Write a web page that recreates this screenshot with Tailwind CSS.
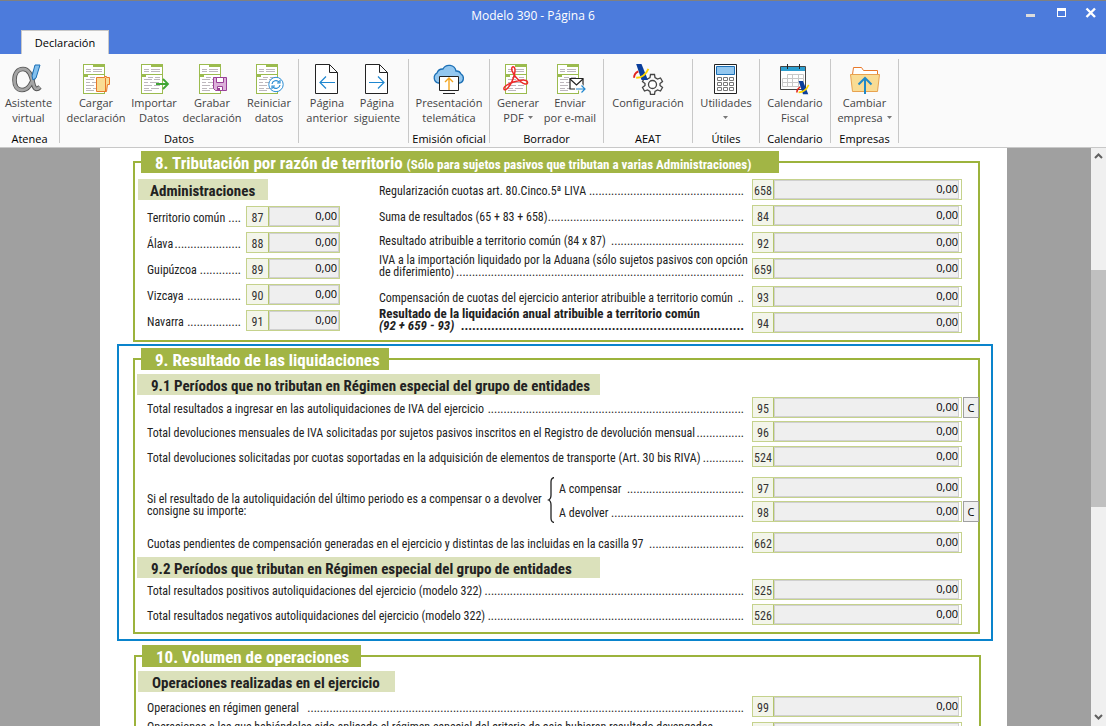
<!DOCTYPE html>
<html lang="es">
<head>
<meta charset="utf-8">
<title>Modelo 390 - Página 6</title>
<script src="https://cdn.jsdelivr.net/npm/@tailwindcss/browser@4"></script>
</head>
<body class="flex h-screen flex-col overflow-hidden bg-[#a0a0a0] font-['Open_Sans','Noto_Sans',sans-serif] text-[11px] text-[#444]">

<svg class="hidden" aria-hidden="true">
  <symbol id="doc" viewBox="0 0 32 32">
    <rect x="3.5" y="1.5" width="21" height="29" fill="#fff" stroke="#9bbb4e"/>
    <path d="M13 1h12v3H13zM3 11h22v1H3zM3 12h5v2H3z" fill="#9bbb4e"/>
    <path d="M6 6.5h5M13 6.5h9M6 8.5h5M13 8.5h9M10 14.5h5M17 14.5h5M6 16.5h8M16 16.5h6M6 19.5h4M12 19.5h9M6 22.5h8M16 22.5h6M6 25.5h5M13 25.5h8M6 27.5h8" stroke="#bdb7bd" fill="none"/>
  </symbol>
  <symbol id="aeat" viewBox="0 0 16 16">
    <path d="M3 0h5l6 15H8z" fill="#0a3e9c"/>
    <path d="M1 13c0-3 2-5 4-6" stroke="#e2231a" stroke-width="1.800" fill="none"/>
    <path d="M3 13c5 0 9-3 11.500-8.500" stroke="#ffd500" stroke-width="1.800" fill="none"/>
  </symbol>
</svg>

<header class="border-t border-[#808080] bg-[#4c7bdc]">
  <div class="relative flex h-[29px] items-center justify-center">
    <h1 class="pr-[40px] text-[12px] leading-4 text-white">Modelo 390 - Página 6</h1>
    <div class="absolute top-[3px] right-[6px] flex gap-3">
      <button class="flex size-[18px] items-center justify-center" aria-label="Minimizar"><svg class="size-[18px]" viewBox="0 0 18 18"><path d="M4 10h9v3H4z" fill="#dcdcdc"/></svg></button>
      <button class="flex size-[18px] items-center justify-center" aria-label="Maximizar"><svg class="size-[18px]" viewBox="0 0 18 18"><path d="M5 4h9v9H5zM6 7v5h7V7z" fill="#fff" fill-rule="evenodd"/></svg></button>
      <button class="flex size-[18px] items-center justify-center" aria-label="Cerrar"><svg class="size-[18px]" viewBox="0 0 18 18"><path d="M4.500 4.500l8.500 8.500M13 4.500l-8.500 8.500" stroke="#fff" stroke-width="2.400"/></svg></button>
    </div>
  </div>
  <nav class="flex pl-[21px]">
    <button class="h-6 w-[88px] border border-b-0 border-[#c8c8c8] bg-[#fafafa] pt-px text-black">Declaración</button>
  </nav>
</header>

<div class="flex h-[94px] shrink-0 border-b border-[#c8c8c8] bg-[#fafafa] pt-[5px] pb-1 leading-[15px] whitespace-nowrap">
  <section class="flex w-[60px] shrink-0 flex-col justify-between border-r border-[#c8c8c8]">
    <div class="flex justify-center pr-[2px]">
      <button class="flex flex-col items-center"><svg class="mt-1 size-8" viewBox="0 0 32 32"><path d="M23 9C21 18 17 27 10 27C5 27 2.500 23 2.500 17C2.500 10 6 6 11 6C17 6 19 12 21 20C22 25 24 28 28 24" stroke="#555" stroke-width="4.600" fill="none"/><path d="M23 9C21 18 17 27 10 27C5 27 2.500 23 2.500 17C2.500 10 6 6 11 6C17 6 19 12 21 20C22 25 24 28 28 24" stroke="#a5a5a5" stroke-width="2.800" fill="none"/><path d="M23 2h5l-4 13-3 2-1-4z" fill="#83c0ee" stroke="#1b6fb5"/></svg>Asistente<br>virtual</button>
    </div>
    <h2 class="text-center leading-[9px] text-black">Atenea</h2>
  </section>
  <section class="flex w-[239px] shrink-0 flex-col justify-between border-r border-[#c8c8c8]">
    <div class="flex pl-[7px]">
      <button class="flex w-[58px] flex-col items-center"><svg class="mt-1 size-8" viewBox="0 0 32 32"><use href="#doc"/><path d="M16.500 14.500h8v-1h2v1h3v7h-2l-1 7h-10z" fill="#f9dc94" stroke="#e8792b"/><path d="M25.500 15v13" stroke="#e8792b"/></svg>Cargar<br>declaración</button>
      <button class="flex w-[58px] flex-col items-center"><svg class="mt-1 size-8" viewBox="0 0 32 32"><use href="#doc"/><path d="M18 21h12M25 16l5 5-5 5" stroke="#3fa535" stroke-width="1.800" fill="none"/></svg>Importar<br>Datos</button>
      <button class="flex w-[58px] flex-col items-center"><svg class="mt-1 size-8" viewBox="0 0 32 32"><use href="#doc"/><path d="M17.500 14.500h13v13h-11l-2-2z" fill="#dcb0da" stroke="#993f97"/><path d="M20.500 14.500h7v5h-7zM21.500 23.500h5v4h-5z" fill="#fff" stroke="#993f97"/><path d="M22 25h2v2h-2z" fill="#993f97"/></svg>Grabar<br>declaración</button>
      <button class="flex w-[56px] flex-col items-center"><svg class="mt-1 size-8" viewBox="0 0 32 32"><use href="#doc"/><circle cx="23" cy="21.500" r="7.200" fill="#fff" stroke="#2a8dd4"/><path d="M19 21a4 4 0 0 1 7-2M27 17v3h-3M27 22a4 4 0 0 1-7 2M19 26v-3h3" stroke="#2a8dd4" stroke-width="1.200" fill="none"/></svg>Reiniciar<br>datos</button>
    </div>
    <h2 class="text-center leading-[9px] text-black">Datos</h2>
  </section>
  <section class="flex w-[110px] shrink-0 flex-col border-r border-[#c8c8c8]">
    <div class="flex pl-[3px]">
      <button class="flex w-[50px] flex-col items-center"><svg class="mt-1 size-8" viewBox="0 0 32 32"><path d="M4.500 1.500h14l8 8v21h-22zM18.500 1.500v8h8" fill="#fff" stroke="#222"/><path d="M24 19.500H9M15 13.500l-6 6 6 6" stroke="#1f87d0" stroke-width="1.200" fill="none"/></svg>Página<br>anterior</button>
      <button class="flex w-[50px] flex-col items-center"><svg class="mt-1 size-8" viewBox="0 0 32 32"><path d="M4.500 1.500h14l8 8v21h-22zM18.500 1.500v8h8" fill="#fff" stroke="#222"/><path d="M8 19.500h15M17 13.500l6 6-6 6" stroke="#1f87d0" stroke-width="1.200" fill="none"/></svg>Página<br>siguiente</button>
    </div>
  </section>
  <section class="flex w-[81px] shrink-0 flex-col justify-between border-r border-[#c8c8c8]">
    <div class="flex justify-center">
      <button class="flex flex-col items-center"><svg class="mt-1 h-8 w-[34px]" viewBox="0 0 34 32"><path d="M6 20a5.500 5.500 0 0 1-1-10a6 6 0 0 1 6-4a7 7 0 0 1 13 2a5 5 0 0 1 5 3a5 5 0 0 1-1 9z" fill="#93c7ef" stroke="#1b6fb5" stroke-width="1.300"/><path d="M7.500 13.500h19v14h-19z" fill="#fff" stroke="#222"/><path d="M11 30.500h12" stroke="#222"/><path d="M17 27V15M13 19l4-4 4 4" stroke="#f2a51f" stroke-width="1.400" fill="none"/></svg>Presentación<br>telemática</button>
    </div>
    <h2 class="text-center leading-[9px] text-black">Emisión oficial</h2>
  </section>
  <section class="flex w-[114px] shrink-0 flex-col justify-between border-r border-[#c8c8c8]">
    <div class="flex pl-[2px]">
      <button class="flex w-[52px] flex-col items-center"><svg class="mt-1 size-8" viewBox="0 0 32 32"><use href="#doc"/><path d="M10.500 4c2.500-1 3 3 2 7c-1.500 6-5 13-8.500 15.500c-2 1-3-1-1-3c3-3 9-5 15-6c5-1 8 0 7.500 2.500c-.500 2-4 1-7-1.500c-4-3-7-7-8.500-11c-.500-2-.500-3 .500-3.500z" stroke="#ee2a2a" stroke-width="1.500" fill="none"/></svg>Generar<span class="flex items-center gap-1">PDF <svg class="h-[3px] w-[5px]" viewBox="0 0 5 3"><path d="M0 0h5L2.500 3z" fill="#777"/></svg></span></button>
      <button class="flex w-[52px] flex-col items-center"><svg class="mt-1 size-8" viewBox="0 0 32 32"><use href="#doc"/><path d="M16 15.500h13v10.500H16z" fill="#fff" stroke="#222" stroke-width="1.200"/><path d="M16 16l6.500 6 6.500-6" fill="none" stroke="#222" stroke-width="1.200"/><path d="M21 26h10M27 22l4 4-4 4" stroke="#fafafa" stroke-width="3" fill="none"/><path d="M22 26h9M27.500 22.500l3.500 3.500-3.500 3.500" stroke="#1f87d0" stroke-width="1.200" fill="none"/></svg>Enviar<br>por e-mail</button>
    </div>
    <h2 class="text-center leading-[9px] text-black">Borrador</h2>
  </section>
  <section class="flex w-[89px] shrink-0 flex-col justify-between border-r border-[#c8c8c8]">
    <div class="flex justify-center">
      <button class="flex flex-col items-center"><svg class="mt-1 size-8" viewBox="0 0 32 32"><path d="M18.500 11.500h4l.500 3 2.500 1.500 3-1 2 3.500-2.500 2v2l2.500 2-2 3.500-3-1-2.500 1.500-.500 3h-4l-.500-3-2.500-1.500-3 1-2-3.500 2.500-2v-2l-2.500-2 2-3.500 3 1 2.500-1.500z" fill="#fafafa" stroke="#444" stroke-width="1.300"/><circle cx="20.500" cy="21.500" r="4" fill="#fff" stroke="#444" stroke-width="1.300"/><use href="#aeat" x="1" y="1" width="17" height="17"/></svg>Configuración</button>
    </div>
    <h2 class="text-center leading-[9px] text-black">AEAT</h2>
  </section>
  <section class="flex w-[67px] shrink-0 flex-col justify-between border-r border-[#c8c8c8]">
    <div class="flex justify-center">
      <button class="flex flex-col items-center"><svg class="mt-1 size-8" viewBox="0 0 32 32"><path d="M4.500 1.500h22v29h-22z" fill="#fff" stroke="#222"/><path d="M6.500 3.500h18v8h-18z" fill="#93c7ef" stroke="#1b6fb5"/><path d="M7.500 14.500h4v3h-4zM13.500 14.500h4v3h-4zM19.500 14.500h4v3h-4zM7.500 19.500h4v3h-4zM13.500 19.500h4v3h-4zM19.500 19.500h4v3h-4zM7.500 24.500h4v3h-4zM13.500 24.500h4v3h-4zM19.500 24.500h4v3h-4z" fill="#fff" stroke="#777"/></svg>Utilidades<svg class="mt-[6px] h-[3px] w-[5px]" viewBox="0 0 5 3"><path d="M0 0h5L2.500 3z" fill="#777"/></svg></button>
    </div>
    <h2 class="text-center leading-[9px] text-black">Útiles</h2>
  </section>
  <section class="flex w-[71px] shrink-0 flex-col justify-between border-r border-[#c8c8c8]">
    <div class="flex justify-center">
      <button class="flex flex-col items-center"><svg class="mt-1 size-8" viewBox="0 0 32 32"><path d="M1.500 3.500h25v23h-25z" fill="#fff" stroke="#444"/><path d="M2 4h24v4H2z" fill="#2d9fd0"/><path d="M8.500 1v5M20.500 1v5" stroke="#222"/><path d="M8.500 11.500h16v4h-16zM3.500 15.500h21v8h-21zM3.500 19.500h21M8.500 11.500v12M13.500 11.500v12M19.500 11.500v12" fill="none" stroke="#c8c8c8"/><use href="#aeat" x="17" y="18" width="14" height="14"/></svg>Calendario<br>Fiscal</button>
    </div>
    <h2 class="text-center leading-[9px] text-black">Calendario</h2>
  </section>
  <section class="flex w-[68px] shrink-0 flex-col justify-between border-r border-[#c8c8c8]">
    <div class="flex justify-center">
      <button class="flex flex-col items-center"><svg class="mt-1 size-8" viewBox="0 0 32 32"><path d="M3.500 11.500l1-7h8l2 3h14v4" fill="#fff" stroke="#e8792b"/><path d="M1.500 11.500h29l-2 17h-25z" fill="#f9dc94" stroke="#e8a24f"/><path d="M16 31V15M9.500 21.500L16 15l6.500 6.500" fill="none" stroke="#2089c8" stroke-width="2"/></svg>Cambiar<span class="flex items-center gap-1">empresa <svg class="h-[3px] w-[5px]" viewBox="0 0 5 3"><path d="M0 0h5L2.500 3z" fill="#777"/></svg></span></button>
    </div>
    <h2 class="text-center leading-[9px] text-black">Empresas</h2>
  </section>
</div>

<div class="flex min-h-0 flex-1">
  <main class="flex-1 overflow-hidden pr-[84px] pl-[100px]">
    <form class="h-full overflow-hidden bg-white font-['Roboto_Condensed','Arial_Narrow',sans-serif] text-[12px] leading-3 text-[#222]">

      <fieldset class="mt-[3px] mr-[27px] ml-[33px] min-w-0 border-2 border-[#9cb33c] pb-[7px]">
        <legend class="ml-[6px] h-[22px] w-[638px] bg-[#a2b545] pl-[14px] text-[17px] leading-[25px] font-bold whitespace-nowrap text-white">8. Tributación por razón de territorio <span class="text-[13px]">(Sólo para sujetos pasivos que tributan a varias Administraciones)</span></legend>
        <div class="flex pt-[6px]">
          <div class="w-[205px] shrink-0">
            <h3 class="ml-[3px] h-[21px] w-[130px] bg-[#dbe1bb] pl-3 text-[15px] leading-[25px] font-bold">Administraciones</h3>
            <div id="administraciones" class="mt-[6px] flex flex-col gap-[5px] pl-3"></div>
          </div>
          <div id="territorio" class="min-w-0 flex-1 pl-[39px]"></div>
        </div>
      </fieldset>

      <div class="mt-[2px] mr-[14px] ml-[17px] border-2 border-[#0a84cc] pt-[2px] pr-[11px] pb-[5px] pl-[14px]">
        <fieldset class="min-w-0 border-2 border-[#9cb33c] pb-[7px]">
          <legend class="ml-[6px] h-[22px] w-[248px] bg-[#a2b545] pl-[14px] text-[17px] leading-[25px] font-bold whitespace-nowrap text-white">9. Resultado de las liquidaciones</legend>
          <h3 class="mt-1 ml-[2px] h-[21px] w-[463px] bg-[#dbe1bb] pl-[14px] text-[15px] leading-[25px] font-bold whitespace-nowrap">9.1 Períodos que no tributan en Régimen especial del grupo de entidades</h3>
          <div id="periodos-no" class="pl-3"></div>
          <div class="mt-[10px] flex pl-3">
            <p class="w-[400px] shrink-0 pt-4 whitespace-nowrap">Si el resultado de la autoliquidación del último periodo es a compensar o a devolver<br>consigne su importe:</p>
            <svg class="h-[46px] w-[8px] shrink-0" viewBox="0 0 8 46"><path d="M7 .500Q4 1 4 5V18Q4 22 1.500 23Q4 24 4 28V41Q4 45 7 45.500" fill="none" stroke="#222" stroke-width="1.300"/></svg>
            <div id="resultado" class="min-w-0 flex-1 pl-1"></div>
          </div>
          <div id="cuotas" class="mt-[9px] pl-3"></div>
          <h3 class="mt-1 ml-[2px] h-[21px] w-[463px] bg-[#dbe1bb] pl-[14px] text-[15px] leading-[25px] font-bold whitespace-nowrap">9.2 Períodos que tributan en Régimen especial del grupo de entidades</h3>
          <div id="periodos-si" class="pl-3"></div>
        </fieldset>
      </div>

      <fieldset class="mt-1 mr-[26px] ml-[34px] min-w-0 border-2 border-[#9cb33c] pb-24">
        <legend class="ml-[6px] h-[22px] w-[219px] bg-[#a2b545] pl-[14px] text-[17px] leading-[25px] font-bold whitespace-nowrap text-white">10. Volumen de operaciones</legend>
        <h3 class="mt-1 ml-[2px] h-[21px] w-[257px] bg-[#dbe1bb] pl-[14px] text-[15px] leading-[25px] font-bold whitespace-nowrap">Operaciones realizadas en el ejercicio</h3>
        <div id="operaciones" class="pr-px pl-[11px]"></div>
      </fieldset>
    </form>
  </main>

  <div class="flex w-[15px] shrink-0 flex-col items-center bg-[#f0f0f0]">
    <button class="flex h-4 w-full items-center justify-center" aria-label="Subir"><svg class="h-[6px] w-[9px]" viewBox="0 0 9 6"><path d="M1 5l3.500-3.500L8 5" fill="none" stroke="#606060" stroke-width="2"/></svg></button>
    <div class="flex w-full flex-1 flex-col">
      <div class="h-[106px]"></div>
      <div class="h-[237px] bg-[#c0c0c0]"></div>
    </div>
    <button class="flex h-[18px] w-full items-center justify-center" aria-label="Bajar"><svg class="h-[6px] w-[9px]" viewBox="0 0 9 6"><path d="M1 1l3.500 3.500L8 1" fill="none" stroke="#606060" stroke-width="2"/></svg></button>
  </div>
</div>

<script>
  // Dot leader; its dots are counted out once the row has its width
  const leader = '<span data-leader aria-hidden="true" class="h-3 min-w-0 flex-1 text-right whitespace-nowrap"></span>';

  // Number and amount boxes shared by every row
  const boxes = (num, width, numWidth, gap) => `
    <span class="flex h-[21px] ${width} shrink-0 border border-[#c5d28c] bg-white">
      <span class="flex ${numWidth} items-center justify-center border-r border-[#b4c56a] bg-[#f3f5ea] pt-[2px] text-[#333]">${num}</span>
      <input id="c${num}" value="0,00" class="${gap} min-w-0 flex-1 border border-[#d0d0d0] bg-[#efefef] pb-[2px] text-right font-['Open_Sans','Noto_Sans',sans-serif] text-[11px] text-black">
    </span>`;

  const row = (r) => `
    <div class="flex h-[21px] ${r.gap}">
      <label for="c${r.num}" class="flex min-w-0 flex-1 flex-col ${r.align || 'justify-center pt-[2px]'} ${r.style || ''}">
        ${r.first ? `<span class="whitespace-nowrap">${r.first}</span>` : ''}
        <span class="flex"><span class="shrink-0 whitespace-pre ${r.italic ? 'italic' : ''}">${r.text}</span>${leader}</span>
      </label>
      <span class="w-[8px] shrink-0"></span>
      ${boxes(r.num, 'w-[210px]', 'w-[21px]', 'mr-[2px]')}
      <span class="flex w-4 shrink-0 pl-px">${r.calc ? '<button type="button" class="w-4 shrink-0 border border-[#a0a0a0] bg-[#f0f0f0] font-[\'Open_Sans\',\'Noto_Sans\',sans-serif] text-[11px] text-black">C</button>' : ''}</span>
    </div>`;

  const fill = (id, rows) => { document.getElementById(id).innerHTML = rows.map(row).join(''); };

  document.getElementById('administraciones').innerHTML = [
    ['Territorio común ', 87], ['Álava', 88], ['Guipúzcoa ', 89], ['Vizcaya ', 90], ['Navarra ', 91]
  ].map(([text, num]) => `
    <div class="flex h-[21px]">
      <label for="c${num}" class="flex min-w-0 flex-1 items-center pt-[2px]"><span class="shrink-0 whitespace-pre">${text}</span>${leader}</label>
      <span class="w-[5px] shrink-0"></span>
      ${boxes(num, 'w-[94px]', 'w-[22px]', 'mr-0 pr-px')}
    </div>`).join('');

  fill('territorio', [
    { num: 658, gap: '', text: 'Regularización cuotas art. 80.Cinco.5ª LIVA ' },
    { num: 84, gap: 'mt-[5px]', text: 'Suma de resultados (65 + 83 + 658)' },
    { num: 92, gap: 'mt-[6px]', text: 'Resultado atribuible a territorio común (84 x 87) ', align: 'justify-start pt-[3px]' },
    { num: 659, gap: 'mt-[5px]', first: 'IVA a la importación liquidado por la Aduana (sólo sujetos pasivos con opción', text: 'de diferimiento)', align: 'justify-end pb-px' },
    { num: 93, gap: 'mt-[7px]', text: 'Compensación de cuotas del ejercicio anterior atribuible a territorio común ' },
    { num: 94, gap: 'mt-[5px]', first: 'Resultado de la liquidación anual atribuible a territorio común', text: '(92 + 659 - 93) ', italic: true, align: 'justify-end pb-px', style: 'text-[13px] leading-3 font-bold' }
  ]);
  fill('periodos-no', [
    { num: 95, gap: 'mt-[2px]', text: 'Total resultados a ingresar en las autoliquidaciones de IVA del ejercicio ', calc: true },
    { num: 96, gap: 'mt-[3px]', text: 'Total devoluciones mensuales de IVA solicitadas por sujetos pasivos inscritos en el Registro de devolución mensual' },
    { num: 524, gap: 'mt-1', text: 'Total devoluciones solicitadas por cuotas soportadas en la adquisición de elementos de transporte (Art. 30 bis RIVA)' }
  ]);
  fill('resultado', [
    { num: 97, gap: '', text: 'A compensar ' },
    { num: 98, gap: 'mt-[3px]', text: 'A devolver ', calc: true }
  ]);
  fill('cuotas', [
    { num: 662, gap: '', text: 'Cuotas pendientes de compensación generadas en el ejercicio y distintas de las incluidas en la casilla 97 ' }
  ]);
  fill('periodos-si', [
    { num: 525, gap: 'mt-px', text: 'Total resultados positivos autoliquidaciones del ejercicio (modelo 322)' },
    { num: 526, gap: 'mt-1', text: 'Total resultados negativos autoliquidaciones del ejercicio (modelo 322)' }
  ]);
  fill('operaciones', [
    { num: 99, gap: 'mt-1', text: 'Operaciones en régimen general  ' },
    { num: 653, gap: 'mt-[5px]', first: 'Operaciones a las que habiéndoles sido aplicado el régimen especial del criterio de caja hubieran resultado devengadas', text: 'conforme a la regla general de devengo ', align: 'justify-center' }
  ]);

  const pen = document.createElement('canvas').getContext('2d');
  const countDots = (el) => {
    const s = getComputedStyle(el);
    pen.font = `${s.fontWeight} ${s.fontSize} ${s.fontFamily}`;
    const dot = pen.measureText('.'.repeat(100)).width / 100;
    el.textContent = '.'.repeat(Math.floor(el.getBoundingClientRect().width / dot));
  };
  const watcher = new ResizeObserver((entries) => entries.forEach((e) => countDots(e.target)));
  document.querySelectorAll('[data-leader]').forEach((el) => watcher.observe(el));
</script>
</body>
</html>
